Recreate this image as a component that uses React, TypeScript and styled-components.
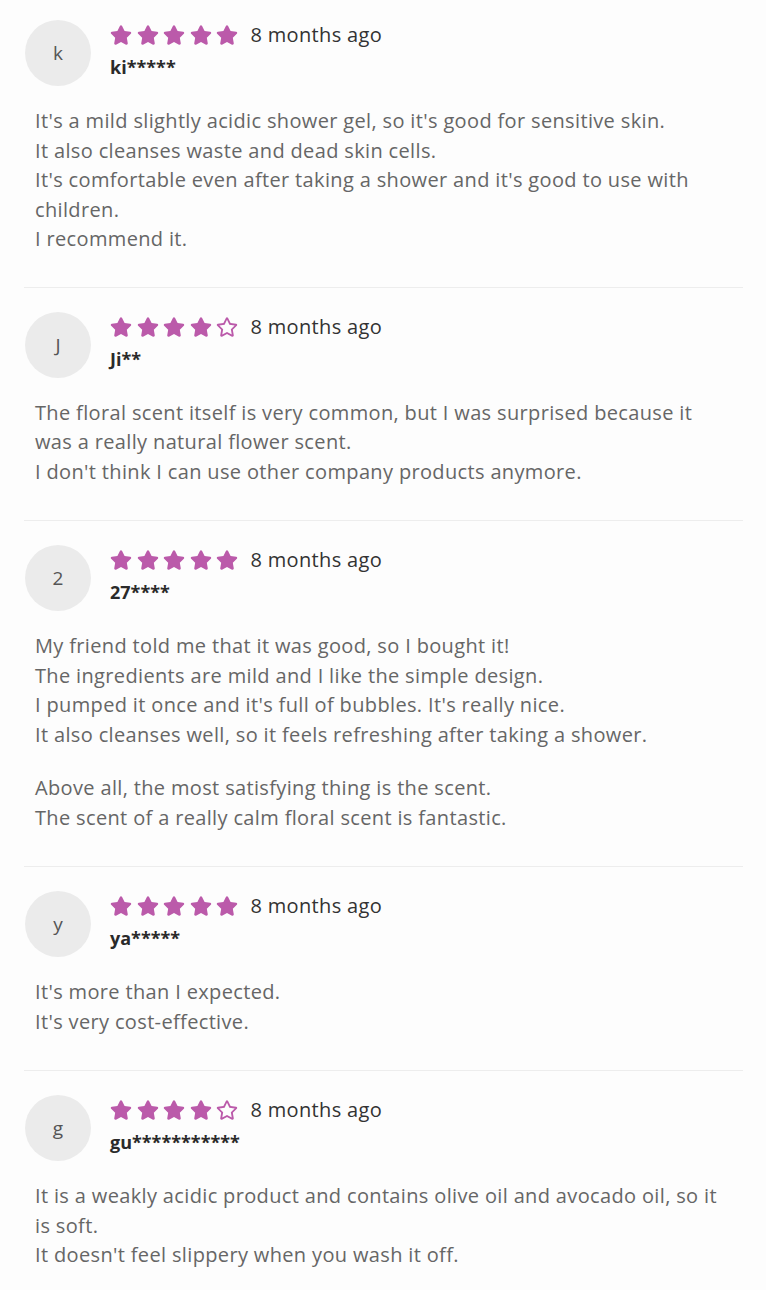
import React from "react";
import styled, { createGlobalStyle } from "styled-components";
import { FaStar, FaRegStar } from "react-icons/fa";

const GlobalStyle = createGlobalStyle`
  html, body {
    margin: 0;
    padding: 0;
    background: #fdfdfd;
  }
  body {
    font-family: "Open Sans", "Noto Sans", "Liberation Sans", sans-serif;
    -webkit-font-smoothing: antialiased;
  }
`;

const List = styled.div`
  width: 719px;
  margin-left: 24px;
  padding-top: 20px;
`;

const ReviewItem = styled.article`
  padding: 24px 0 34px;
  border-bottom: 1px solid #ededed;
  &:first-child {
    padding-top: 0;
    padding-bottom: 33px;
  }
  &:last-child {
    border-bottom: none;
  }
`;

const Header = styled.div`
  display: flex;
  align-items: flex-start;
  gap: 19px;
`;

const Avatar = styled.div`
  width: 66px;
  height: 66px;
  flex: 0 0 66px;
  margin-left: 1px;
  border-radius: 50%;
  background: #ebebeb;
  color: #555;
  font-size: 19px;
  display: flex;
  align-items: center;
  justify-content: center;
`;

const Meta = styled.div`
  display: flex;
  flex-direction: column;
  padding-top: 2px;
`;

const RatingRow = styled.div`
  display: flex;
  align-items: center;
  height: 26px;
`;

const Stars = styled.div`
  display: flex;
  align-items: center;
  gap: 4.6px;
  margin-right: 12px;
  color: #bb5aaa;
`;

const Date = styled.span`
  font-size: 20px;
  letter-spacing: 0.35px;
  color: #333;
  line-height: 26px;
`;

const Name = styled.div`
  margin-top: 6px;
  font-size: 18px;
  line-height: 26px;
  font-weight: 700;
  color: #2a2a2a;
`;

const Body = styled.div`
  margin-top: 20px;
  padding: 0 16px 0 11px;
  display: flex;
  flex-direction: column;
  gap: 24px;
`;

const Paragraph = styled.p`
  margin: 0;
  font-size: 20px;
  letter-spacing: 0.35px;
  line-height: 29.5px;
  color: #666;
`;

type Review = {
  initial: string;
  name: string;
  rating: number;
  paragraphs: string[][];
};

const reviews: Review[] = [
  {
    initial: "k",
    name: "ki*****",
    rating: 5,
    paragraphs: [
      [
        "It's a mild slightly acidic shower gel, so it's good for sensitive skin.",
        "It also cleanses waste and dead skin cells.",
        "It's comfortable even after taking a shower and it's good to use with children.",
        "I recommend it.",
      ],
    ],
  },
  {
    initial: "J",
    name: "Ji**",
    rating: 4,
    paragraphs: [
      [
        "The floral scent itself is very common, but I was surprised because it was a really natural flower scent.",
        "I don't think I can use other company products anymore.",
      ],
    ],
  },
  {
    initial: "2",
    name: "27****",
    rating: 5,
    paragraphs: [
      [
        "My friend told me that it was good, so I bought it!",
        "The ingredients are mild and I like the simple design.",
        "I pumped it once and it's full of bubbles. It's really nice.",
        "It also cleanses well, so it feels refreshing after taking a shower.",
      ],
      [
        "Above all, the most satisfying thing is the scent.",
        "The scent of a really calm floral scent is fantastic.",
      ],
    ],
  },
  {
    initial: "y",
    name: "ya*****",
    rating: 5,
    paragraphs: [["It's more than I expected.", "It's very cost-effective."]],
  },
  {
    initial: "g",
    name: "gu***********",
    rating: 4,
    paragraphs: [
      [
        "It is a weakly acidic product and contains olive oil and avocado oil, so it is soft.",
        "It doesn't feel slippery when you wash it off.",
      ],
    ],
  },
];

export default function App() {
  return (
    <>
      <GlobalStyle />
      <List>
        {reviews.map((r, i) => (
          <ReviewItem key={i}>
            <Header>
              <Avatar>{r.initial}</Avatar>
              <Meta>
                <RatingRow>
                  <Stars>
                    {[0, 1, 2, 3, 4].map((s) =>
                      s < r.rating ? (
                        <FaStar key={s} size={22} />
                      ) : (
                        <FaRegStar key={s} size={22} />
                      )
                    )}
                  </Stars>
                  <Date>8 months ago</Date>
                </RatingRow>
                <Name>{r.name}</Name>
              </Meta>
            </Header>
            <Body>
              {r.paragraphs.map((p, j) => (
                <Paragraph key={j}>
                  {p.map((line, k) => (
                    <React.Fragment key={k}>
                      {line}
                      {k < p.length - 1 && <br />}
                    </React.Fragment>
                  ))}
                </Paragraph>
              ))}
            </Body>
          </ReviewItem>
        ))}
      </List>
    </>
  );
}
